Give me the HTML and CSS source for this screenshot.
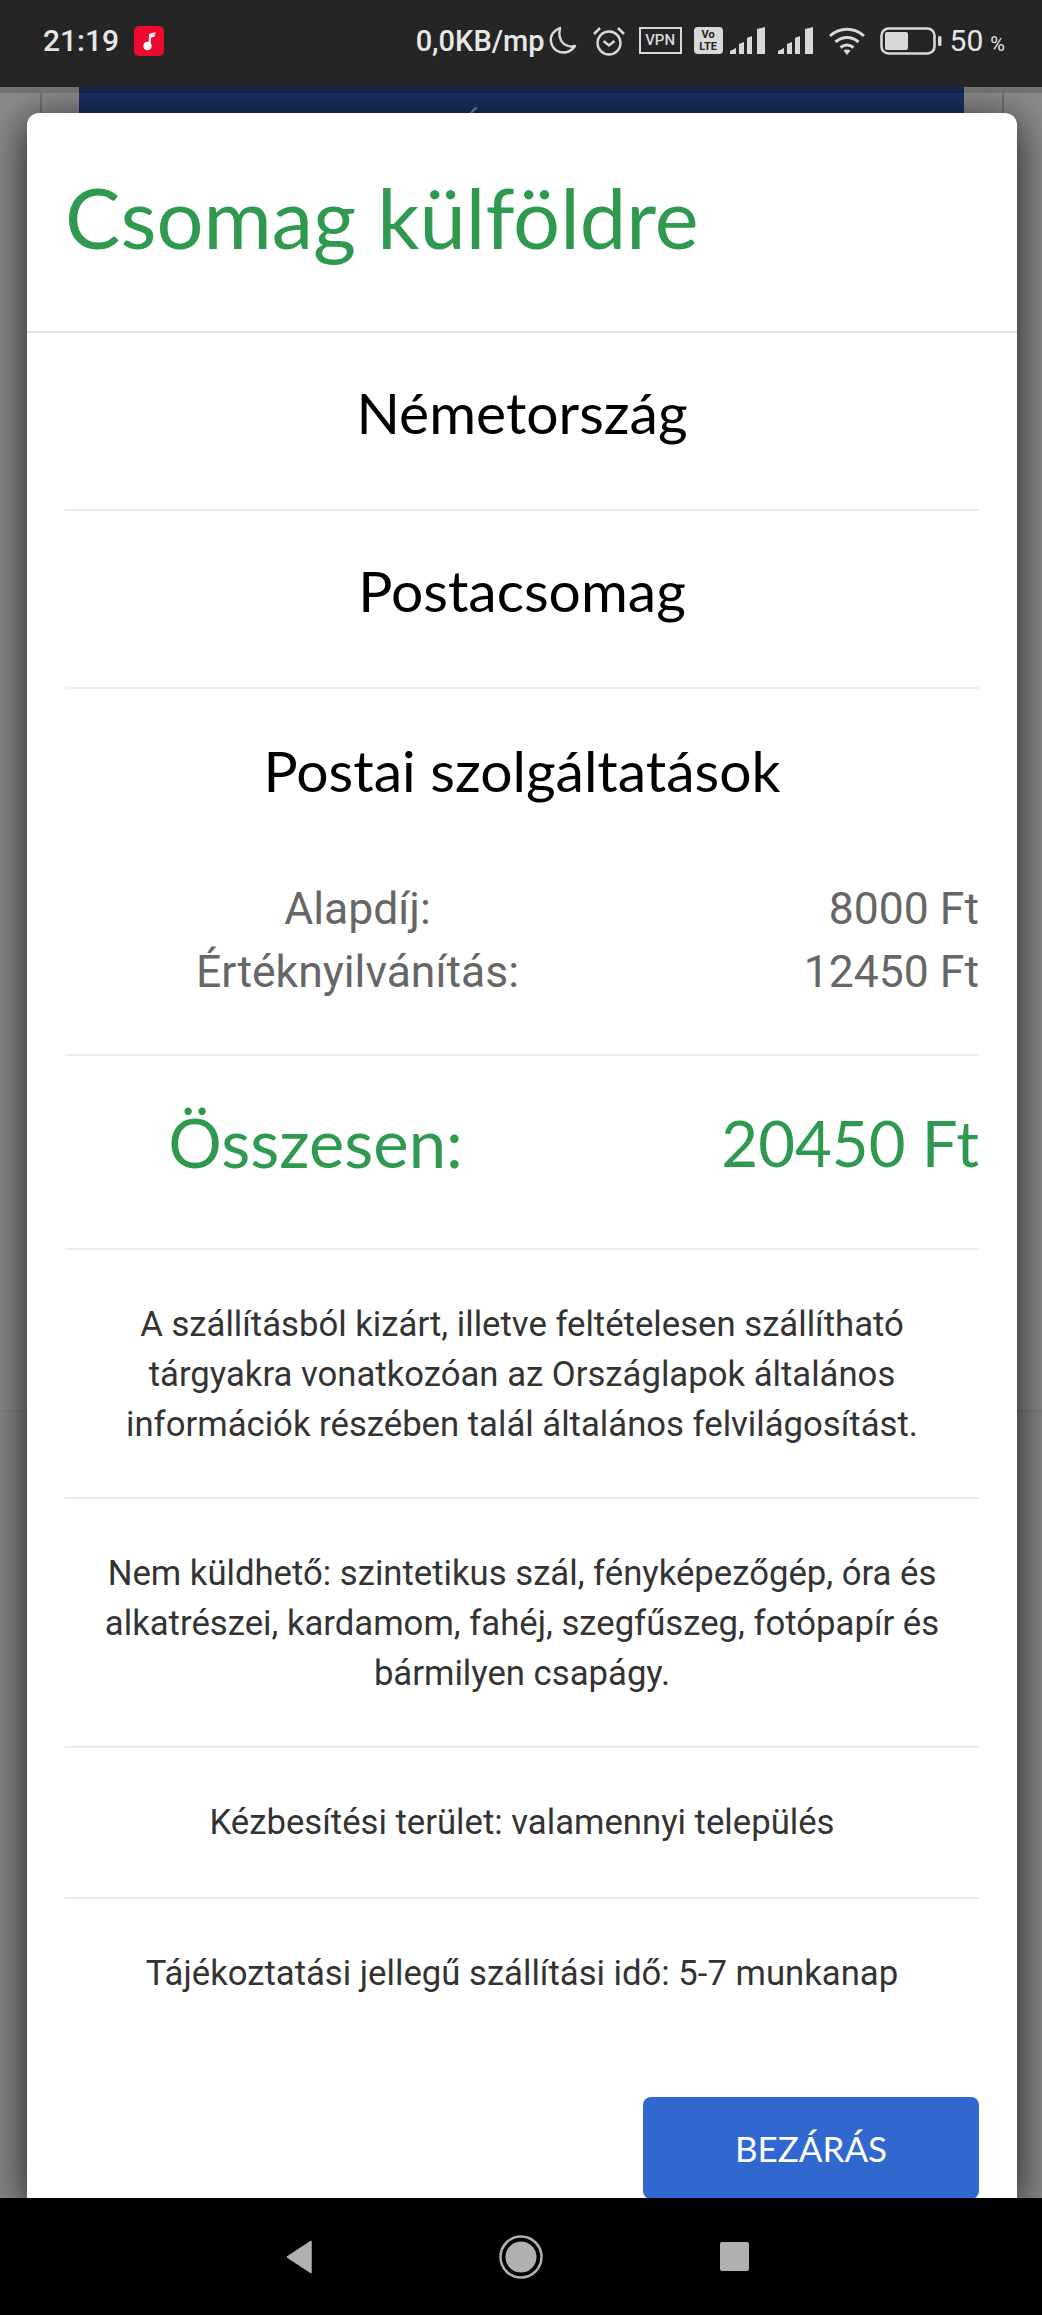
FILE: index.html
```html
<!DOCTYPE html>
<html lang="hu">
<head>
  <meta charset="utf-8">
  <title>Csomag külföldre</title>
  <link rel="stylesheet" href="styles.css">
</head>
<body>
  <div class="phone">
    <div class="status-bar">
      <div class="status-left">
        <span class="clock">21:19</span>
        <span class="app-badge">
          <svg width="30" height="30" viewBox="0 0 30 30"><rect width="30" height="30" rx="5" fill="#ee0a2c"/><path d="M15 8.500c2-1.500 4.500-2 7-2-.5 1.300-1.500 2-3 2.500 1 0 1.800 0 2.500-.3-.6 1.600-2 2.600-4.300 2.800l-.7 6.500h-2z" fill="#fff"/><circle cx="13.500" cy="20" r="4.200" fill="#fff"/></svg>
        </span>
      </div>
      <div class="status-right">
        <span class="net-speed">0,0KB/mp</span>
        <svg class="moon" width="32" height="30" viewBox="0 0 32 30"><path d="M12 2C5 5 2 10 3 16c1.500 8 9 12 16 10 3-1 6-3 8-6-9 2-18-4-15-18z" fill="none" stroke="#d8d8d8" stroke-width="2.400" stroke-linejoin="round"/></svg>
        <svg class="alarm" width="34" height="30" viewBox="0 0 34 30"><circle cx="17" cy="17" r="11.500" fill="none" stroke="#d8d8d8" stroke-width="2.400"/><path d="M11.500 15l5.500 4.500 5.500-4.500" fill="none" stroke="#d8d8d8" stroke-width="2.400"/><path d="M2 8l6-6M32 8l-6-6" stroke="#d8d8d8" stroke-width="2.600"/></svg>
        <span class="vpn-tag">VPN</span>
        <span class="volte-tag">Vo<br>LTE</span>
        <svg class="signal" width="36" height="27" viewBox="0 0 36 27"><path d="M0 27v-3l6-3v6zM9 27V17l5-2v12zM17 27V11l5-2v18zM27 27V2l8-2v27z" fill="#d8d8d8"/></svg>
        <svg class="signal signal-second" width="36" height="27" viewBox="0 0 36 27"><path d="M0 27v-3l6-3v6zM9 27V17l5-2v12zM17 27V11l5-2v18zM27 27V2l8-2v27z" fill="#d8d8d8"/></svg>
        <svg class="wifi" width="38" height="28" viewBox="0 0 38 28"><path d="M2 9c10-9 24-9 34 0M7.500 15c7-6 16-6 23 0M12.500 20.500c4-3 9-3 13 0" fill="none" stroke="#d8d8d8" stroke-width="3"/><path d="M15.500 23.500c2-1.500 5-1.500 7 0L19 28z" fill="#d8d8d8"/></svg>
        <svg class="battery" width="62" height="28" viewBox="0 0 62 28"><rect x="1.500" y="1.500" width="53" height="25" rx="7" fill="none" stroke="#d8d8d8" stroke-width="2.600"/><rect x="5" y="5" width="23" height="18" rx="2" fill="#d8d8d8"/><rect x="58" y="9" width="3.500" height="10" rx="1.500" fill="#d8d8d8"/></svg>
        <span class="battery-level">50</span><span class="battery-unit">%</span>
      </div>
    </div>

    <div class="stage">
      <div class="page-behind">
        <div class="page-side page-side-left"></div>
        <div class="page-blue-bar">
          <svg class="page-title-tip" width="10" height="8" viewBox="0 0 10 8"><path d="M9 1C6 2 4 4 2 8" fill="none" stroke="#8794b3" stroke-width="2"/></svg>
        </div>
        <div class="page-side page-side-right"></div>
      </div>

      <div class="modal">
        <div class="modal-header">
          <h1 class="modal-title">Csomag külföldre</h1>
        </div>
        <div class="modal-body">
          <div class="row row-heading">Németország</div>
          <div class="row row-heading">Postacsomag</div>
          <div class="row row-services">
            <div class="services-title">Postai szolgáltatások</div>
            <div class="fee-line"><span class="fee-label">Alapdíj:</span><span class="fee-value">8000 Ft</span></div>
            <div class="fee-line"><span class="fee-label">Értéknyilvánítás:</span><span class="fee-value">12450 Ft</span></div>
          </div>
          <div class="row row-total">
            <span class="total-label">Összesen:</span>
            <span class="total-value">20450 Ft</span>
          </div>
          <div class="row row-text">A szállításból kizárt, illetve feltételesen szállítható tárgyakra vonatkozóan az Országlapok általános információk részében talál általános felvilágosítást.</div>
          <div class="row row-text">Nem küldhető: szintetikus szál, fényképezőgép, óra és alkatrészei, kardamom, fahéj, szegfűszeg, fotópapír és bármilyen csapágy.</div>
          <div class="row row-text row-text-short">Kézbesítési terület: valamennyi település</div>
          <div class="row row-text row-text-short">Tájékoztatási jellegű szállítási idő: 5-7 munkanap</div>
        </div>
        <div class="modal-footer">
          <button class="close-btn" type="button">BEZÁRÁS</button>
        </div>
      </div>
    </div>

    <div class="nav-bar">
      <svg class="nav-back" width="26" height="34" viewBox="0 0 26 34"><path d="M25 1.500v31L1.500 17z" fill="#b0b0b0" stroke="#b0b0b0" stroke-width="1.500" stroke-linejoin="round"/></svg>
      <svg width="44" height="44" viewBox="0 0 44 44"><circle cx="22" cy="22" r="20.500" fill="none" stroke="#b0b0b0" stroke-width="2.500"/><circle cx="22" cy="22" r="15.500" fill="#b0b0b0"/></svg>
      <svg width="29" height="29" viewBox="0 0 29 29"><rect width="29" height="29" rx="2" fill="#b0b0b0"/></svg>
    </div>
  </div>
</body>
</html>
```
FILE: styles.css
```css
* {
  box-sizing: border-box;
}
html, body {
  margin: 0;
  padding: 0;
}
.phone {
  width: 1042px;
  height: 2315px;
  display: flex;
  flex-direction: column;
  overflow: hidden;
  font-family: Roboto, sans-serif;
}

/* status bar */
.status-bar {
  height: 87px;
  flex: none;
  background: #252525;
  color: #e6e6e6;
  display: flex;
  justify-content: space-between;
  align-items: center;
  padding: 0 37px 6px 43px;
}
.status-left {
  display: flex;
  align-items: center;
  gap: 15px;
}
.clock {
  font-size: 30px;
  font-weight: 500;
}
.app-badge {
  display: flex;
}
.status-right {
  display: flex;
  align-items: center;
}
.net-speed {
  font-size: 29px;
  font-weight: 500;
  margin-right: 3px;
}
.moon {
  margin-right: 12px;
}
.alarm {
  margin-right: 13px;
}
.vpn-tag {
  width: 43px;
  height: 27px;
  border: 2px solid #d8d8d8;
  color: #d8d8d8;
  font-size: 15px;
  font-weight: 500;
  line-height: 23px;
  text-align: center;
  margin-right: 12px;
}
.volte-tag {
  width: 29px;
  height: 27px;
  background: #d8d8d8;
  color: #252525;
  border-radius: 4px;
  font-size: 11px;
  font-weight: 700;
  line-height: 12px;
  text-align: center;
  padding-top: 2px;
  margin-right: 7px;
}
.signal {
  margin-right: 12px;
}
.signal-second {
  margin-right: 14px;
}
.wifi {
  margin-right: 14px;
}
.battery {
  margin-right: 8px;
}
.battery-level {
  font-size: 30px;
}
.battery-unit {
  font-size: 20px;
  margin-left: 7px;
  margin-top: 7px;
}

/* dimmed page behind the dialog */
.stage {
  flex: 1;
  position: relative;
  overflow: hidden;
  background: linear-gradient(#8a8a8a 0, #8a8a8a 1323px, #7f7f7f 1323px, #7f7f7f 1325px, #878787 1325px);
}
.page-behind {
  display: flex;
}
.page-side {
  width: 79px;
  height: 40px;
  border-top: 6px solid #757575;
}
.page-side-left {
  padding-left: 40px;
  background: linear-gradient(to right, #6f6f6f 0, #6f6f6f 2px, transparent 2px) 40px 0 no-repeat;
}
.page-side-right {
  width: 78px;
  background: linear-gradient(to right, #6f6f6f 0, #6f6f6f 2px, transparent 2px) 38px 0 no-repeat;
}
.page-blue-bar {
  flex: 1;
  height: 40px;
  background: #193061;
  border-top: 6px solid #13274f;
  position: relative;
  overflow: hidden;
}
.page-title-tip {
  position: absolute;
  left: 389px;
  top: 14px;
}

/* dialog */
.modal {
  position: absolute;
  top: 26px;
  left: 27px;
  width: 990px;
  height: 2086px;
  background: #fff;
  border-radius: 12px 12px 0 0;
  box-shadow: 0 8px 40px rgba(0, 0, 0, 0.8);
  display: flex;
  flex-direction: column;
}
.modal-header {
  height: 220px;
  padding: 49px 38px 0;
  border-bottom: 2px solid #e4e4e4;
  flex: none;
}
.modal-title {
  margin: 0;
  font-family: Lato, sans-serif;
  font-weight: 400;
  font-size: 83px;
  line-height: 110px;
  color: #2f9a4f;
}
.modal-body {
  padding: 0 38px;
}
.row {
  border-bottom: 2px solid #ececec;
  text-align: center;
}
.row:last-child {
  border-bottom: none;
}
.row-heading {
  height: 178px;
  font-family: Lato, sans-serif;
  font-size: 57px;
  line-height: 158px;
  color: #000;
}
.row-services {
  height: 367px;
  padding-top: 47px;
}
.services-title {
  font-family: Lato, sans-serif;
  font-size: 57px;
  line-height: 68px;
  color: #000;
  margin-bottom: 74px;
}
.fee-line {
  display: grid;
  grid-template-columns: 585px 1fr;
  font-size: 44.5px;
  line-height: 63px;
  color: #666;
}
.fee-value {
  text-align: right;
}
.row-total {
  height: 194px;
  padding-bottom: 20px;
  display: grid;
  grid-template-columns: 501px 1fr;
  align-items: center;
  font-family: Lato, sans-serif;
  font-size: 67px;
  color: #2f9a4f;
}
.total-value {
  text-align: right;
  font-size: 63.5px;
}
.row-text {
  padding: 49px 20px 48px;
  font-size: 34.7px;
  line-height: 50px;
  color: #333;
}
.row-text-short {
  padding-bottom: 50px;
}
.modal-footer {
  display: flex;
  justify-content: flex-end;
  padding: 0 38px;
  margin-top: auto;
}
.close-btn {
  width: 336px;
  height: 102px;
  border: none;
  border-radius: 8px;
  background: #3068d0;
  color: #fff;
  font-family: Lato, sans-serif;
  font-size: 35px;
  padding-bottom: 2px;
}

/* android nav buttons */
.nav-bar {
  height: 117px;
  flex: none;
  background: #000;
  position: relative;
  z-index: 1;
  display: flex;
  align-items: center;
  justify-content: center;
  gap: 177px;
  padding-right: 7px;
}
.nav-back {
  margin-right: 10px;
}
```
